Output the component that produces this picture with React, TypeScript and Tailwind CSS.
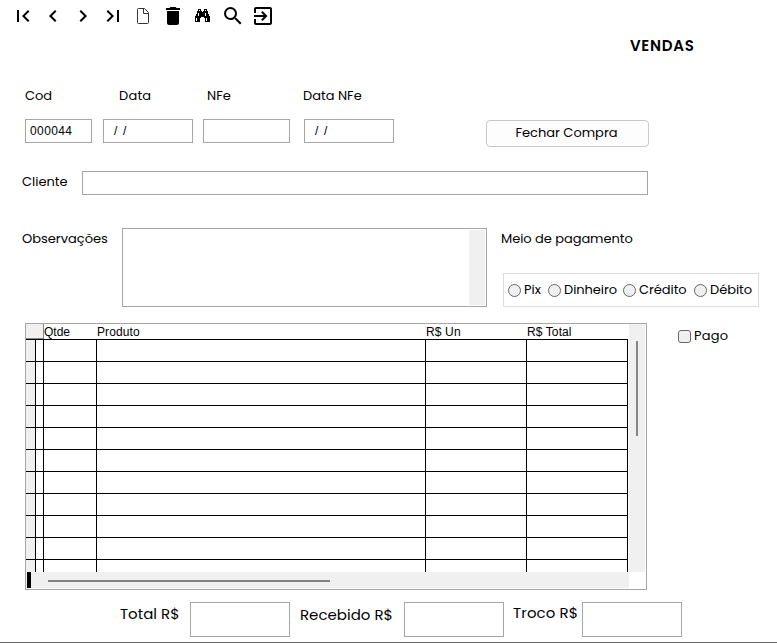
import type { ReactNode } from "react";
import {
  MdChevronLeft,
  MdChevronRight,
  MdDelete,
  MdExitToApp,
  MdFirstPage,
  MdLastPage,
  MdSearch,
} from "react-icons/md";

const poppins = "font-['Poppins','Open_Sans',sans-serif]";
const arial = "font-['Liberation_Sans',Arial,sans-serif]";

function FileIcon() {
  return (
    <svg width="24" height="24" viewBox="0 0 24 24" fill="none" stroke="#333" strokeWidth="1">
      <path d="M7.5 4.5h6l4 4v10q0 1-1 1h-9q-1 0-1-1v-13q0-1 1-1z" />
      <path d="M12.5 4.5v5h5" />
    </svg>
  );
}

function BinocularsIcon() {
  return (
    <svg width="24" height="24" viewBox="0 0 24 24" shapeRendering="crispEdges">
      <path d="M7 5h3v2h1v1h1v-1h1v-2h3v2h1v3h1v2h1v6h-5v-4h-1v-1h-3v1h-1v4h-5v-6h1v-2h1v-3h1z" />
      <path fill="#fff" d="M8 6h1v1h-1zM14 6h1v1h-1zM7 9h1v3h-1zM14 9h1v3h-1zM5 14h1v3h-1zM15 14h1v3h-1z" />
    </svg>
  );
}

const tools: { name: string; icon: ReactNode }[] = [
  { name: "Primeiro", icon: <MdFirstPage size={24} /> },
  { name: "Anterior", icon: <MdChevronLeft size={24} /> },
  { name: "Próximo", icon: <MdChevronRight size={24} /> },
  { name: "Último", icon: <MdLastPage size={24} /> },
  { name: "Novo", icon: <FileIcon /> },
  { name: "Excluir", icon: <MdDelete size={24} /> },
  { name: "Localizar", icon: <BinocularsIcon /> },
  { name: "Pesquisar", icon: <MdSearch size={24} /> },
  { name: "Sair", icon: <MdExitToApp size={24} /> },
];

function Field({ className, children }: { className: string; children?: ReactNode }) {
  return (
    <div className={`shrink-0 whitespace-pre border border-[#a6a6a6] bg-white text-xs ${arial} ${className}`}>
      {children}
    </div>
  );
}

function Radio({ label, className }: { label: string; className: string }) {
  return (
    <label className={`flex shrink-0 items-center gap-[3px] ${className}`}>
      <span className="size-[13px] shrink-0 rounded-full border border-[#666] bg-[#f0f0f0]" />
      <span className="whitespace-nowrap tracking-[-0.05px]">{label}</span>
    </label>
  );
}

function Grid() {
  return (
    <div className={`ml-[25px] flex h-[267px] w-[622px] flex-col border border-[#a6a6a6] text-xs leading-[17px] ${arial}`}>
      <div className="flex h-[248px]">
        <div className="w-[602px] overflow-hidden">
          <div className="flex h-[16px] border-b border-black">
            <div className="w-[18px] border-r border-b border-[#888] bg-[#f0f0f0]" />
            <div className="w-[53px]">Qtde</div>
            <div className="w-[329px] tracking-[0.1px]">Produto</div>
            <div className="w-[101px] tracking-[0.15px]">R$ Un</div>
            <div className="w-[101px] tracking-[0.1px]">R$ Total</div>
          </div>
          {Array.from({ length: 11 }, (_, row) => (
            <div key={row} className="flex h-[22px] border-b border-black">
              <div className="w-[10px] border-r border-black bg-[#f0f0f0]" />
              <div className="w-[8px] border-r border-black" />
              <div className="w-[53px] border-r border-black" />
              <div className="w-[329px] border-r border-black" />
              <div className="w-[101px] border-r border-black" />
              <div className="w-[101px] border-r border-black" />
            </div>
          ))}
        </div>
        <div className="ml-px flex w-[16px] justify-center bg-[#f0f0f0] pt-[17px]">
          <div className="h-[95px] w-[2px] bg-[#858585]" />
        </div>
      </div>
      <div className="flex h-[16px] w-[603px] bg-[#f0f0f0] pl-px">
        <div className="h-[16px] w-[4px] bg-black" />
        <div className="mt-2 ml-[17px] h-[2px] w-[282px] bg-[#858585]" />
      </div>
    </div>
  );
}

export default function App() {
  return (
    <main className={`h-[644px] w-[777px] overflow-hidden bg-white text-[13px] leading-5 text-black ${poppins}`}>
      <div className="h-[643px] border-b border-[#666]">
        <div className="flex h-8 pl-2">
          {tools.map((tool) => (
            <button key={tool.name} aria-label={tool.name} className="flex w-[30px] items-center justify-center">
              {tool.icon}
            </button>
          ))}
        </div>
        <h1 className="ml-[630px] mt-1 h-5 text-[15px] leading-5 font-semibold tracking-[0.7px]">VENDAS</h1>

        <div className="mt-[30px] flex h-5 pl-[25px]">
          <span className="w-[94px]">Cod</span>
          <span className="w-[88px] tracking-[0.2px]">Data</span>
          <span className="w-[96px]">NFe</span>
          <span>Data NFe</span>
        </div>
        <div className="mt-[13px] flex h-7 pl-[25px]">
          <Field className="h-6 w-[67px] pl-1 leading-[23px] tracking-[0.4px]">000044</Field>
          <Field className="ml-[11px] h-6 w-[90px] pl-[10px] leading-[23px] tracking-[-0.3px]">{"/  /"}</Field>
          <Field className="ml-[10px] h-6 w-[87px]" />
          <Field className="ml-[14px] h-6 w-[90px] pl-[10px] leading-[23px] tracking-[-0.3px]">{"/  /"}</Field>
          <button className="ml-[92px] mt-px h-[27px] w-[163px] shrink-0 rounded-[4px] border border-[#c8c8c8] bg-[#fdfdfd] pr-[2px] pb-[2px] leading-[23px]">
            Fechar Compra
          </button>
        </div>

        <div className="mt-[24px] flex h-6 pl-[22px]">
          <span className="mt-px w-[60px]">Cliente</span>
          <Field className="h-6 w-[566px]" />
        </div>

        <div className="mt-[33px] flex h-[79px] pl-[22px]">
          <span className="mt-px w-[100px]">Observações</span>
          <div className="flex h-[79px] w-[365px] justify-end border border-[#a6a6a6] p-px">
            <div className="w-[16px] bg-[#f0f0f0]" />
          </div>
          <section className="ml-[14px] flex flex-col">
            <h2 className="h-[45px] pt-px tracking-[-0.05px]">Meio de pagamento</h2>
            <div className="ml-[2px] flex h-[34px] w-[256px] border border-[#dcdcdc] pl-1">
              <Radio label="Pix" className="w-[40px]" />
              <Radio label="Dinheiro" className="w-[75px]" />
              <Radio label="Crédito" className="w-[71px]" />
              <Radio label="Débito" className="w-[60px]" />
            </div>
          </section>
        </div>

        <div className="mt-4 flex">
          <Grid />
          <label className="ml-[31px] mt-[3px] flex h-5 items-center gap-[3px]">
            <span className="size-[13px] rounded-[3px] border border-[#666] bg-[#f0f0f0]" />
            <span className="tracking-[0.2px]">Pago</span>
          </label>
        </div>

        <div className="mt-3 flex h-[35px] pl-[120px] text-[15px]">
          <span className="mt-[2px] w-[70px]">Total R$</span>
          <Field className="h-[35px] w-[100px]" />
          <span className="ml-[10px] mt-[3px] w-[104px]">Recebido R$</span>
          <Field className="h-[35px] w-[100px]" />
          <span className="ml-[9px] mt-px w-[69px] tracking-[0.1px]">Troco R$</span>
          <Field className="h-[35px] w-[100px]" />
        </div>
      </div>
    </main>
  );
}
